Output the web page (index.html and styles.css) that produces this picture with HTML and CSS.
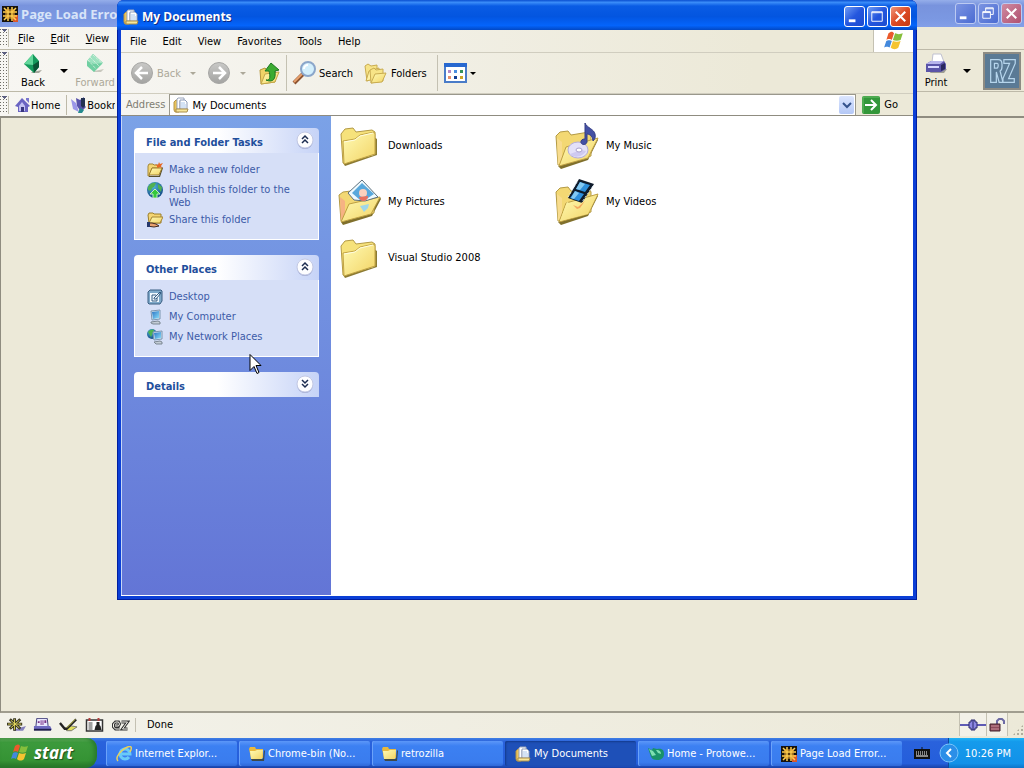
FILE: index.html
```html
<!DOCTYPE html>
<html lang="en">
<head>
  <meta charset="UTF-8" />
  <title>My Documents</title>
  <link rel="stylesheet" href="styles.css">
</head>
<body>
  <svg class="sprites" aria-hidden="true">
    <defs>
      <linearGradient id="gFolder" x1="0" y1="0" x2="1" y2="1">
        <stop offset="0" stop-color="#fffbb5" />
        <stop offset="1" stop-color="#f2d364" />
      </linearGradient>
      <linearGradient id="gGray" x1="0" y1="0" x2="0" y2="1">
        <stop offset="0" stop-color="#c9c9c7" />
        <stop offset="1" stop-color="#a3a3a1" />
      </linearGradient>
      <linearGradient id="gScreen" x1="0" y1="0" x2="1" y2="1">
        <stop offset="0" stop-color="#2a73c4" />
        <stop offset="1" stop-color="#8be0fa" />
      </linearGradient>
      <radialGradient id="gGlobe" cx="0.4" cy="0.3" r="0.8">
        <stop offset="0" stop-color="#4fb6d8" />
        <stop offset="1" stop-color="#0d3f7c" />
      </radialGradient>
    </defs>

    <symbol id="folder" viewBox="0 0 48 48">
      <path d="M7 40l31-8V14l3 2v16L9 43z" fill="#8c7b33" />
      <path d="M5 11l4-5 8-1 3 4 16-2 3 2v22L7 40z" fill="#f6e27b" stroke="#b39a45" />
      <path d="M7 18l12-2 5-4 14-3 1 2v20L8 41z" fill="url(#gFolder)" stroke="#c2a444" />
      <path d="M8 19l11-2 5-4 13-3" fill="none" stroke="#fffde0" />
    </symbol>

    <symbol id="folder-open" viewBox="0 0 48 48">
      <path d="M4 43l29-8 10-20 1 2-10 20L7 46z" fill="#80702c" />
      <path d="M2 13l4-4 8-1 3 4 18-3 2 4v20L4 42z" fill="#f3d873" stroke="#b39a45" />
      <path d="M3 15l5 4v18l-4 5z" fill="#f8dc8e" />
      <path d="M5 43l7-19 32-9-10 20z" fill="url(#gFolder)" stroke="#bd9f42" />
    </symbol>

    <symbol id="folder-pictures" viewBox="0 0 48 48">
      <path d="M5 43l29-8 10-17 1 2-9 17L7 46z" fill="#80702c" />
      <path d="M3 16l4-3 8-1 3 3 18-3 2 4v18L5 42z" fill="#f3d873" stroke="#b39a45" />
      <path d="M4 18l5 4v15l-4 5z" fill="#f6b383" />
      <path d="M5 43l8-18 31-7-9 17z" fill="url(#gFolder)" stroke="#bd9f42" />
      <path d="M26 1l16 17-13 4-11-1-6-7z" fill="#eefaff" stroke="#5c6f7c" />
      <path d="M26 4l12 11-9 6h-5l-8-7z" fill="#58a8dc" />
      <circle cx="27" cy="14" r="4" fill="#fbd0bd" />
      <path d="M23 18a4 4 0 0 0 9-1z" fill="#e8705e" />
      <path d="M24 27l9-2-1 4-4 4z" fill="#9fd6e9" />
    </symbol>

    <symbol id="folder-music" viewBox="0 0 48 48">
      <use href="#folder-open" />
      <ellipse cx="24" cy="27" rx="10" ry="8" fill="#e4e1f8" stroke="#b4add8" />
      <path d="M16 31c3 4 12 4 16-3l-5-1z" fill="#cfcaf0" />
      <ellipse cx="25" cy="27" rx="3" ry="2" fill="#fff" stroke="#a89fcc" />
      <path d="M31 0c2 5 9 6 10 11 1 4-1 6-2 7 0-6-5-7-6-7v8c-1 4-7 3-6-1 1-2 3-2 4-2z" fill="#4450a4" stroke="#343d86" />
    </symbol>

    <symbol id="folder-videos" viewBox="0 0 48 48">
      <use href="#folder-open" />
      <path d="M25 0l15 5-12 19-14-5z" fill="#101c2c" />
      <path d="M26 3l10 3-5 7-9-3zM21 12l9 3-5 7-9-3z" fill="#2e8fdb" />
      <path d="M26 3l5 2-5 6-4-1zM21 12l4 2-5 6-3-1z" fill="#83c9f2" />
      <path d="M23 3l-9 15M39 7L28 23" stroke="#d4e6f2" stroke-dasharray="2 2" />
      <path d="M6 42l7-19 8 4 22-11-9 19z" fill="url(#gFolder)" />
      <path d="M19 26l5 2 7-6-5 7-3 1z" fill="#f2a85e" />
    </symbol>

    <symbol id="folder-small" viewBox="0 0 16 16">
      <path d="M2 13h12l1-9 1 1-1 10H3z" fill="#3f4a4a" />
      <path d="M0 3l1-2h5l1 2h7v9H2z" fill="#e9b93e" />
      <path d="M1 5h5l2-1h6l-1 9H2z" fill="url(#gFolder)" />
    </symbol>

    <symbol id="docs" viewBox="0 0 16 16">
      <path d="M1 5l2-2h3v12H2l-1-2z" fill="#eac45a" stroke="#b59448" />
      <path d="M4 2l1-1h6v3H7v8H4z" fill="#fff" stroke="#9aa5bb" />
      <path d="M7 3h5l2 2v7H7z" fill="#fff" stroke="#8c9bb8" />
      <path d="M8 6h4M8 8h5M8 10h5" stroke="#a9c6ea" />
      <path d="M3 12h12l-1 3H3z" fill="#f8e79a" stroke="#a98d4a" />
    </symbol>

    <symbol id="flag" viewBox="0 0 20 18">
      <path d="M5 2c2-2 4-2 5 0L8 8C7 7 4 7 3 8z" fill="#ea5a2c" />
      <path d="M11 2c2 1 5 1 7 0l-2 6c-2 1-5 1-7 0z" fill="#86bf3c" />
      <path d="M3 9c1-1 4-1 5 0l-2 6c-1-1-4-1-5 0z" fill="#4389dd" />
      <path d="M9 9c2 1 5 1 7 0l-2 6c-2 2-5 2-7 0z" fill="#f5c431" />
    </symbol>

    <symbol id="mozilla" viewBox="0 0 16 16">
      <path d="M0 0h16v16H0z" fill="#17130f" />
      <path d="M11 9h5v7h-5z" fill="#d9572b" />
      <path d="M5 4h6l1 1v6l-1 1H5l-1-1V5z" fill="#5c3a0e" />
      <path d="M6 1v14M10 1v14M1 6h14M1 10h14" stroke="#ffcf4e" stroke-width="1.5" />
      <path d="M2 2l3 3M14 2l-3 3M2 14l3-3M14 14l-3-3" stroke="#ffcf4e" stroke-width="1.5" />
      <path d="M4 4h8v8H4z" fill="none" stroke="#f0b23a" />
    </symbol>

    <symbol id="publish" viewBox="0 0 16 16">
      <circle cx="8" cy="8" r="8" fill="url(#gGlobe)" />
      <path d="M1 5c2-4 6-5 8-4L7 5 5 6l-1 3-3-1zM11 2l4 3-1 5-3-4z" fill="#51b052" />
      <path d="M8 7l5 5h-3v4H6v-4H3z" fill="#35c83d" stroke="#bfeeba" />
    </symbol>

    <symbol id="new-folder" viewBox="0 0 16 16">
      <path d="M2 14h10l3-9 1 1-3 9H2z" fill="#554e2b" />
      <path d="M1 4l1-2h4l1 1h5v3H5l-3 8H1z" fill="#f4d573" stroke="#a38735" />
      <path d="M2 13l3-7h10l-3 7z" fill="url(#gFolder)" stroke="#9f7f2c" />
      <path d="M12 0l1 2 3-1-2 3 1 2-3-1-2 1V4L8 2l3 1z" fill="#e76824" />
    </symbol>

    <symbol id="share" viewBox="0 0 16 16">
      <path d="M1 3l1-2h4l1 1h7v9H2z" fill="#f4d573" stroke="#9b7e2b" />
      <path d="M2 11l3-6h11l-3 6z" fill="url(#gFolder)" stroke="#a68534" />
      <path d="M0 11h5l4 1 3 2-5 1-7-1z" fill="#e9a16d" stroke="#432c22" />
      <path d="M0 10h3v5H0z" fill="#26386c" />
    </symbol>

    <symbol id="desktop" viewBox="0 0 16 16">
      <path d="M3 1h11l1 1v10l-2 3H2l-1-1V3z" fill="#7ea9ca" stroke="#3a5e82" />
      <path d="M3 4h9v9H3z" fill="#f0f8ff" />
      <path d="M9 6H5v6h5V9M7 9l6-6 1 1-5 6H7z" fill="none" stroke="#345a80" />
    </symbol>

    <symbol id="computer" viewBox="0 0 16 16">
      <path d="M4 2l9-1v9l-8 1z" fill="#d8e6f0" stroke="#7a95b0" />
      <path d="M5 3l7-1v7l-6 1z" fill="url(#gScreen)" />
      <path d="M4 13l7-1 2 1v2H6l-2-1z" fill="#c4cdd6" stroke="#7b8792" />
    </symbol>

    <symbol id="network" viewBox="0 0 16 16">
      <circle cx="5" cy="5" r="5" fill="url(#gGlobe)" />
      <path d="M1 3c2-3 5-3 6-2L4 8z" fill="#4db353" />
      <path d="M6 3l9-1v8l-8 1z" fill="#d8e6f0" stroke="#7a95b0" />
      <path d="M7 4l7-1v6l-6 1z" fill="url(#gScreen)" />
      <path d="M7 13l6-1 2 1v2H9z" fill="#c4cdd6" stroke="#7b8792" />
    </symbol>

    <symbol id="arrow-left" viewBox="0 0 24 24">
      <circle cx="12" cy="12" r="10.5" fill="url(#gGray)" stroke="#a7a7a5" />
      <path d="M18 12H7M12 6l-6 6 6 6" fill="none" stroke="#fff" stroke-width="2.5" />
    </symbol>

    <symbol id="arrow-right" viewBox="0 0 24 24">
      <circle cx="12" cy="12" r="10.5" fill="url(#gGray)" stroke="#a7a7a5" />
      <path d="M6 12h11M12 6l6 6-6 6" fill="none" stroke="#fff" stroke-width="2.5" />
    </symbol>

    <symbol id="up" viewBox="0 0 24 24">
      <path d="M3 9l5-2 2 2 8-1v13L4 23z" fill="#efd367" stroke="#b6973b" />
      <path d="M4 23l4-10 14-2-4 10z" fill="url(#gFolder)" stroke="#c4a64a" />
      <path d="M9 19c5 1 4-5 3-9H8l6-8 8 7-4 1c1 8-2 12-9 9z" fill="#3bab31" stroke="#1c7522" />
    </symbol>

    <symbol id="search" viewBox="0 0 24 24">
      <path d="M2 22l9-9" stroke="#8b5230" stroke-width="4" />
      <path d="M2 21l8-8" stroke="#e8a06c" stroke-width="2" />
      <circle cx="16" cy="8" r="7" fill="#d3effc" stroke="#8ba6ca" stroke-width="2" />
      <path d="M12 8a4 4 0 0 1 4-4" fill="none" stroke="#fff" stroke-width="2" />
    </symbol>

    <symbol id="folders" viewBox="0 0 24 24">
      <path d="M1 5l3-2 3 2 6-1v12L3 20z" fill="#f7e487" stroke="#c9ac50" />
      <path d="M2 20l3-10 10-3v10z" fill="#fdf2a6" stroke="#c9ac50" />
      <path d="M6 9l4-2 2 2 7-1v12L7 22z" fill="#f7e487" stroke="#c9ac50" />
      <path d="M7 22l4-9 11-1-4 9z" fill="url(#gFolder)" stroke="#c9ac50" />
    </symbol>

    <symbol id="views" viewBox="0 0 24 20">
      <path d="M2 1h21v18H2z" fill="#fff" stroke="#4a7cc8" stroke-width="2" />
      <path d="M1 0h23v4H1z" fill="#2768d0" />
      <path d="M5 7h3v3H5z" fill="#b48ac4" />
      <path d="M11 7h3v3h-3z" fill="#4b8fe0" />
      <path d="M17 7h3v3h-3z" fill="#35915a" />
      <path d="M5 13h3v3H5z" fill="#e68f6c" />
      <path d="M11 13h3v3h-3z" fill="#123f94" />
      <path d="M17 13h3v3h-3z" fill="#cba52a" />
    </symbol>

    <symbol id="go" viewBox="0 0 18 18">
      <rect width="18" height="18" rx="2" fill="#33973a" />
      <path d="M1 17V1h16" fill="none" stroke="#6abf68" />
      <path d="M3 9h10M9 4l5 5-5 5" fill="none" stroke="#fff" stroke-width="2" />
    </symbol>

    <symbol id="chevrons-up" viewBox="0 0 18 18">
      <circle cx="9" cy="10" r="8" fill="#9fa8cf" />
      <circle cx="9" cy="9" r="8" fill="#fdfdff" stroke="#c3c9e4" />
      <path d="M6 8l3-3 3 3M6 12l3-3 3 3" fill="none" stroke="#1c2c50" stroke-width="1.5" />
    </symbol>

    <symbol id="chevrons-down" viewBox="0 0 18 18">
      <circle cx="9" cy="10" r="8" fill="#9fa8cf" />
      <circle cx="9" cy="9" r="8" fill="#fdfdff" stroke="#c3c9e4" />
      <path d="M6 5l3 3 3-3M6 9l3 3 3-3" fill="none" stroke="#1c2c50" stroke-width="1.5" />
    </symbol>

    <symbol id="caret" viewBox="0 0 8 4">
      <path d="M0 0h8L4 4z" fill="currentColor" />
    </symbol>

    <symbol id="min" viewBox="0 0 20 20">
      <path d="M4 13h7v3H4z" fill="#fff" />
    </symbol>
    <symbol id="max" viewBox="0 0 20 20">
      <path d="M4 5h11v10H4zM4 6h11" fill="none" stroke="#fff" />
    </symbol>
    <symbol id="restore" viewBox="0 0 20 20">
      <path d="M7 8V4h8v7h-3M4 8h8v7H4zM4 9h8M7 5h8" fill="none" stroke="#fff" />
    </symbol>
    <symbol id="close" viewBox="0 0 20 20">
      <path d="M5 5l10 10M15 5L5 15" stroke="#fff" stroke-width="2.2" />
    </symbol>

    <symbol id="gem-left" viewBox="0 0 20 22">
      <path d="M9 19l10-2-3 3H8z" fill="#a5a59b" />
      <path d="M10 1l6 7v6l-5 6-10-9z" fill="#159a5c" />
      <path d="M10 1L1 11l9 1z" fill="#63d79b" />
      <path d="M10 12l1 8 5-6V8z" fill="#0b5435" />
    </symbol>

    <symbol id="gem-right" viewBox="0 0 20 22">
      <path d="M9 18l10-2-3 3H8z" fill="#c8c8be" />
      <path d="M8 1l10 9-9 9-7-6V8z" fill="#70cfa2" />
      <path d="M8 1l10 9-9 1-7-3z" fill="#9de2c0" />
      <path d="M5 4l10 10M3 7l8 9M8 2l10 9" stroke="#ecf4e8" stroke-dasharray="1 1" />
    </symbol>

    <symbol id="home" viewBox="0 0 16 16">
      <path d="M0 9l7-8 8 8-2 1v5H3v-5z" fill="#6a64c2" />
      <path d="M4 9l3-4 3 4v5H4z" fill="#c4c2f2" />
      <path d="M6 10h3v5H6z" fill="#37357e" />
      <path d="M11 1h3v5l-3-3z" fill="#7a76cf" />
    </symbol>

    <symbol id="bookmark" viewBox="0 0 16 16">
      <path d="M0 2l5 4 3 9-6-3z" fill="#9b97e8" />
      <path d="M5 1l4 2 4-3v8l2 2-5 5-4-6z" fill="#5752aa" />
      <path d="M10 1h4v8l-2 2-2-2z" fill="#223152" />
      <path d="M9 11l4 2-2 3H7z" fill="#248a8e" />
    </symbol>

    <symbol id="printer" viewBox="0 0 24 20">
      <path d="M8 15h15l-3 4H6z" fill="#9d9d95" />
      <path d="M9 0h8l3 8H8z" fill="#fff" stroke="#c0c1d0" />
      <path d="M2 10l5-3h13l2 3v5l-5 3H2z" fill="#5a54a8" />
      <path d="M2 10l5-3h13l-4 3z" fill="#b6b3ec" />
      <path d="M4 13h11" stroke="#d9d8ff" stroke-width="2" />
      <path d="M17 11l4-2v6l-4 2z" fill="#2a285e" />
    </symbol>

    <symbol id="rz" viewBox="0 0 36 36">
      <path d="M6 30V6h8q4 0 4 5v2q0 4-2 5l3 12h-4l-3-11v11zM10 10h3q1 0 1 2t-1 3h-3zM20 6h12v4l-7 16h6v4H19v-4l7-16h-6z" fill="none" stroke="#b6d5ec" stroke-width="1.3" />
    </symbol>

    <symbol id="ie" viewBox="0 0 16 16">
      <path d="M13 11a5 5 0 1 1 1-3H5" fill="none" stroke="#69cbf8" stroke-width="3" />
      <path d="M2 15C-3 10 12-2 15 1c1 1 0 3-1 5" fill="none" stroke="#e8d05c" stroke-width="1.5" />
    </symbol>

    <symbol id="proto" viewBox="0 0 16 16">
      <path d="M0 2l4 2 1-2 4 1c6-1 7 2 7 5 0 4-3 6-7 6-5 0-6-3-7-6z" fill="#19926a" />
      <path d="M1 3l4 2 3 4-4 1zM8 4c4 0 5 2 5 4l-3-1z" fill="#7de0b3" />
    </symbol>

    <symbol id="compass" viewBox="0 0 20 14">
      <path d="M10 11l10-3-3 5H7z" fill="#8480bd" />
      <path d="M8 0v13M0 6h16M3 1l11 10M14 1L3 11" stroke="#34331f" stroke-width="3" />
      <path d="M8 1v11M1 6h14M4 2l9 8M13 2L4 10" stroke="#e6d95e" />
    </symbol>

    <symbol id="mail" viewBox="0 0 20 14">
      <path d="M4 0h11l1 9H3z" fill="#e9e7ff" stroke="#3c3976" />
      <path d="M5 3h2v2H5zM8 2h1v5H8zM10 2h1v5h-1zM12 2h2v3h-2z" fill="#7a3385" />
      <path d="M1 8h17l2 4H1z" fill="#6f6ac0" />
      <path d="M1 12h18" stroke="#1e1c4a" stroke-width="2" />
    </symbol>

    <symbol id="composer" viewBox="0 0 20 14">
      <path d="M7 10l6-2 6 1-6 4H8z" fill="#dfdd5c" stroke="#77776d" />
      <path d="M1 5l5 6h2L18 1" fill="none" stroke="#222" stroke-width="2.5" />
      <path d="M8 10L17 1" stroke="#dfdd5c" />
    </symbol>

    <symbol id="address-card" viewBox="0 0 18 14">
      <path d="M1 2h16v11H1z" fill="#fff" stroke="#333" stroke-width="1.5" />
      <path d="M12 0h2v3h-2zM3 0h2v3H3z" fill="#b23c3c" />
      <path d="M3 5h4M3 7h4M3 9h4M3 11h4" stroke="#444" />
      <path d="M9 12l1-4 1-1V4h3v3l1 1 1 4z" fill="#222" />
    </symbol>

    <symbol id="chatzilla" viewBox="0 0 18 14">
      <path d="M8 11H4L2 9V6l2-2h3l1 2-1 2H4M10 4h6l-5 7h5" fill="none" stroke="#333" stroke-width="3" />
      <path d="M8 11H4L2 9V6l2-2h3l1 2-1 2H4M10 4h6l-5 7h5" fill="none" stroke="#f4f2ea" />
    </symbol>

    <symbol id="plug" viewBox="0 0 26 14">
      <path d="M0 7h26" stroke="#5f5bb4" stroke-width="2" />
      <path d="M9 4h2V2h4v2h2v6h-2v2h-4v-2H9z" fill="#8d88e4" stroke="#2b286c" />
      <path d="M13 2v10" stroke="#2b286c" />
    </symbol>

    <symbol id="lock" viewBox="0 0 16 14">
      <path d="M8 7V3l2-2h3l2 2v3" fill="none" stroke="#6c6aa4" stroke-width="2" />
      <path d="M1 6h10v7H1z" fill="#8c4a5a" stroke="#44252c" />
      <path d="M2 8h8M2 11h8" stroke="#c98f98" />
    </symbol>

    <symbol id="keyboard" viewBox="0 0 16 12">
      <path d="M8 3V0" stroke="#111" />
      <rect x="0" y="2" width="16" height="10" fill="#111" />
      <path d="M2 5h12M2 7h12" stroke="#fff" stroke-dasharray="1 1" />
      <path d="M2 9h12" stroke="#fff" />
    </symbol>

    <symbol id="tray-arrow" viewBox="0 0 20 20">
      <circle cx="10" cy="10" r="9" fill="#2b8fe8" stroke="#7cc5fa" />
      <path d="M12 6l-4 4 4 4" fill="none" stroke="#fff" stroke-width="2" />
    </symbol>
  </svg>

  <div class="desktop">
    <section class="browser">
      <header class="browser-title">
        <svg class="icon16"><use href="#mozilla" /></svg>
        <span class="title-text">Page Load Error</span>
        <div class="controls">
          <button class="control" aria-label="Minimize"><svg><use href="#min" /></svg></button>
          <button class="control" aria-label="Restore"><svg><use href="#restore" /></svg></button>
          <button class="control control-close" aria-label="Close"><svg><use href="#close" /></svg></button>
        </div>
      </header>

      <nav class="browser-menu">
        <span class="grip"></span>
        <button><u>F</u>ile</button>
        <button><u>E</u>dit</button>
        <button><u>V</u>iew</button>
      </nav>

      <div class="browser-tools">
        <span class="grip"></span>
        <button class="tool tool-back"><svg><use href="#gem-left" /></svg>Back</button>
        <button class="drop" aria-label="Back history"><svg><use href="#caret" /></svg></button>
        <button class="tool tool-forward" disabled><svg><use href="#gem-right" /></svg>Forward</button>
        <span class="spacer"></span>
        <button class="tool"><svg><use href="#printer" /></svg>Print</button>
        <button class="drop" aria-label="Print options"><svg><use href="#caret" /></svg></button>
        <a class="throbber" href="#" aria-label="RetroZilla"><svg><use href="#rz" /></svg></a>
      </div>

      <div class="bookmarks">
        <span class="grip"></span>
        <a class="bookmark" href="#"><svg class="icon16"><use href="#home" /></svg>Home</a>
        <a class="bookmark bookmark-next" href="#"><svg class="icon16"><use href="#bookmark" /></svg>Bookm</a>
      </div>

      <div class="browser-page"></div>

      <footer class="status">
        <div class="components">
          <button aria-label="Navigator"><svg><use href="#compass" /></svg></button>
          <button aria-label="Mail"><svg><use href="#mail" /></svg></button>
          <button aria-label="Composer"><svg><use href="#composer" /></svg></button>
          <button aria-label="Address Book"><svg><use href="#address-card" /></svg></button>
          <button aria-label="ChatZilla"><svg><use href="#chatzilla" /></svg></button>
        </div>
        <span class="status-text">Done</span>
        <span class="status-cell"><svg class="plug"><use href="#plug" /></svg></span>
        <span class="status-cell status-lock"><svg class="lock"><use href="#lock" /></svg></span>
        <span class="resize"></span>
      </footer>
    </section>

    <main class="explorer">
      <header class="explorer-title">
        <svg class="icon16"><use href="#docs" /></svg>
        <h1 class="title-text">My Documents</h1>
        <div class="controls">
          <button class="control" aria-label="Minimize"><svg><use href="#min" /></svg></button>
          <button class="control" aria-label="Maximize"><svg><use href="#max" /></svg></button>
          <button class="control control-close" aria-label="Close"><svg><use href="#close" /></svg></button>
        </div>
      </header>

      <div class="explorer-body">
        <nav class="menu">
          <button>File</button>
          <button>Edit</button>
          <button>View</button>
          <button>Favorites</button>
          <button>Tools</button>
          <button>Help</button>
          <span class="flag"><svg><use href="#flag" /></svg></span>
        </nav>

        <div class="toolbar">
          <div class="group">
            <button class="item" disabled><svg class="icon24"><use href="#arrow-left" /></svg>Back</button>
            <button class="drop" disabled aria-label="Back list"><svg><use href="#caret" /></svg></button>
            <button class="item" disabled aria-label="Forward"><svg class="icon24"><use href="#arrow-right" /></svg></button>
            <button class="drop" disabled aria-label="Forward list"><svg><use href="#caret" /></svg></button>
            <button class="item" aria-label="Up"><svg class="icon24"><use href="#up" /></svg></button>
          </div>
          <div class="group group-panes">
            <button class="item"><svg class="icon24"><use href="#search" /></svg>Search</button>
            <button class="item"><svg class="icon24"><use href="#folders" /></svg>Folders</button>
          </div>
          <div class="group">
            <button class="item" aria-label="Views"><svg class="icon24"><use href="#views" /></svg><svg class="caret"><use href="#caret" /></svg></button>
          </div>
        </div>

        <form class="address">
          <label for="path">Address</label>
          <div class="path">
            <svg class="icon16"><use href="#docs" /></svg>
            <input type="text" id="path" value="My Documents" />
            <button type="button" class="path-drop" aria-label="Show list">
              <svg viewBox="0 0 10 8"><path d="M1 2l4 4 4-4" fill="none" stroke="#34528c" stroke-width="2" /></svg>
            </button>
          </div>
          <button type="submit" class="go"><svg><use href="#go" /></svg>Go</button>
        </form>

        <div class="content">
          <aside class="tasks">
            <section class="panel">
              <h2>File and Folder Tasks <button aria-label="Collapse"><svg><use href="#chevrons-up" /></svg></button></h2>
              <ul>
                <li><svg class="icon16"><use href="#new-folder" /></svg><a href="#">Make a new folder</a></li>
                <li><svg class="icon16"><use href="#publish" /></svg><a href="#">Publish this folder to the Web</a></li>
                <li><svg class="icon16"><use href="#share" /></svg><a href="#">Share this folder</a></li>
              </ul>
            </section>
            <section class="panel">
              <h2>Other Places <button aria-label="Collapse"><svg><use href="#chevrons-up" /></svg></button></h2>
              <ul>
                <li><svg class="icon16"><use href="#desktop" /></svg><a href="#">Desktop</a></li>
                <li><svg class="icon16"><use href="#computer" /></svg><a href="#">My Computer</a></li>
                <li><svg class="icon16"><use href="#network" /></svg><a href="#">My Network Places</a></li>
              </ul>
            </section>
            <section class="panel">
              <h2>Details <button aria-label="Expand"><svg><use href="#chevrons-down" /></svg></button></h2>
            </section>
          </aside>

          <div class="files">
            <a class="file" href="#"><svg><use href="#folder" /></svg>Downloads</a>
            <a class="file" href="#"><svg><use href="#folder-music" /></svg>My Music</a>
            <a class="file" href="#"><svg><use href="#folder-pictures" /></svg>My Pictures</a>
            <a class="file" href="#"><svg><use href="#folder-videos" /></svg>My Videos</a>
            <a class="file" href="#"><svg><use href="#folder" /></svg>Visual Studio 2008</a>
          </div>
        </div>
      </div>
    </main>

    <footer class="taskbar">
      <button class="start"><svg><use href="#flag" /></svg>start</button>
      <div class="buttons">
        <button class="task"><svg class="icon16"><use href="#ie" /></svg>Internet Explor...</button>
        <button class="task"><svg class="icon16"><use href="#folder-small" /></svg>Chrome-bin (No...</button>
        <button class="task"><svg class="icon16"><use href="#folder-small" /></svg>retrozilla</button>
        <button class="task task-active"><svg class="icon16"><use href="#docs" /></svg>My Documents</button>
        <button class="task"><svg class="icon16"><use href="#proto" /></svg>Home - Protowe...</button>
        <button class="task"><svg class="icon16"><use href="#mozilla" /></svg>Page Load Error...</button>
      </div>
      <button class="language" aria-label="Keyboard"><svg><use href="#keyboard" /></svg></button>
      <div class="tray">
        <button class="tray-toggle" aria-label="Show hidden icons"><svg><use href="#tray-arrow" /></svg></button>
        <time>10:26 PM</time>
      </div>
    </footer>

    <svg class="cursor" viewBox="0 0 13 21">
      <path d="M1 1v16l4-4 3 7 2-1-3-7h5z" fill="#fff" stroke="#000" />
    </svg>
  </div>
</body>
</html>
```
FILE: styles.css
```css
* {
  box-sizing: border-box;
}

body {
  margin: 0;
  font-family: "DejaVu Sans Condensed", "Liberation Sans", sans-serif;
  font-size: 11px;
  line-height: 13px;
  color: #000;
  cursor: default;
}

button, input {
  font: inherit;
  color: inherit;
  padding: 0;
  margin: 0;
  border: none;
  background: none;
}

a {
  color: inherit;
  text-decoration: none;
}

svg {
  display: block;
  flex: none;
}

.sprites {
  position: absolute;
  width: 0;
  height: 0;
}

.icon16 {
  width: 16px;
  height: 16px;
}

.icon24 {
  width: 24px;
  height: 24px;
}

.desktop {
  position: relative;
  display: flex;
  flex-direction: column;
  height: 100vh;
  overflow: hidden;
  background-color: #ece9d8;
}

/* window title bars */

.title-text {
  flex: 1;
  margin: 0;
  font-family: "Open Sans", "Noto Sans", sans-serif;
  font-size: 12px;
  font-weight: bold;
  line-height: 16px;
  white-space: nowrap;
}

.controls {
  display: flex;
  gap: 2px;
}

.control {
  width: 21px;
  height: 21px;
  border: 1px solid #fff;
  border-radius: 3px;
  background: linear-gradient(135deg, #6f9cf4, #2456de 50%, #1c4ccf);
}

.control svg {
  width: 19px;
  height: 19px;
}

.control-close {
  background: linear-gradient(135deg, #f0957a, #dc4a24 50%, #c43a14);
}

/* browser window */

.browser {
  flex: 1;
  display: flex;
  flex-direction: column;
}

.browser-title {
  display: flex;
  align-items: center;
  gap: 3px;
  height: 27px;
  padding: 0 2px;
  color: #d8e4f8;
  background: linear-gradient(#95aeea, #7893dd 20%, #7b98e2 70%, #839fe8);
}

.browser-title .title-text {
  font-size: 13px;
}

.browser-title .control {
  border-color: #bccaf2;
  background: linear-gradient(135deg, #7b94e2, #4a6bd2);
}

.browser-title .control-close {
  background: linear-gradient(135deg, #cf8ba2, #b0506f);
}

.browser-menu, .browser-tools, .bookmarks {
  display: flex;
  background: linear-gradient(90deg, #f7f6f2, #ece9d8 80%);
  border-bottom: 1px solid #bdb9a8;
}

.grip {
  width: 9px;
  margin: 2px 1px 2px 0;
  border-right: 1px solid #c4c1b2;
  background:
    conic-gradient(from -45deg at 50% 100%, #5c5f80 90deg, transparent 90deg) 2px 0 / 5px 3px no-repeat,
    radial-gradient(#6f6e68 30%, transparent 40%) 2px 5px / 3px 3px;
}

.browser-menu {
  height: 23px;
}

.browser-menu button {
  margin-left: 16px;
}

.browser-menu .grip + button {
  margin-left: 8px;
}

.browser-tools {
  height: 42px;
  align-items: center;
  padding-right: 3px;
}

.browser-tools .grip, .bookmarks .grip {
  align-self: stretch;
}

.tool {
  display: flex;
  flex-direction: column;
  align-items: center;
  gap: 1px;
  min-width: 46px;
}

.tool svg {
  width: 24px;
  height: 22px;
}

.tool:disabled {
  color: #aca899;
}

.spacer {
  flex: 1;
}

.drop {
  width: 16px;
}

.drop svg {
  width: 8px;
  height: 4px;
  margin: auto;
}

.throbber {
  width: 38px;
  height: 38px;
  margin-left: 8px;
  border: 2px solid #8d8b83;
  background-color: #5a7a95;
}

.throbber svg {
  width: 34px;
  height: 34px;
}

.bookmarks {
  height: 26px;
  align-items: center;
  padding-top: 2px;
  border-bottom: 2px solid #8f8c80;
}

.bookmark {
  display: flex;
  align-items: center;
  height: 20px;
  padding: 0 6px 0 5px;
}

.bookmark-next {
  width: 49px;
  padding: 0 0 0 4px;
  overflow: hidden;
  border-left: 1px solid #bdb9a8;
}

.browser-page {
  flex: 1;
  border-left: 1px solid #8f8c80;
  border-bottom: 2px solid #a09d8f;
}

.status {
  display: flex;
  align-items: center;
  height: 25px;
  padding-bottom: 2px;
  background: linear-gradient(90deg, #f3f2ea, #ece9d8);
}

.components {
  display: flex;
  align-items: center;
  gap: 7px;
  padding: 0 5px 0 7px;
  border-right: 1px solid #c4c1b2;
}

.components svg {
  width: 19px;
  height: 14px;
}

.status-text {
  flex: 1;
  padding-left: 11px;
}

.status-cell {
  display: flex;
  align-items: center;
  height: 23px;
  border-left: 1px solid #c4c1b2;
  background-color: #f3f1e8;
}

.status-lock {
  padding: 0 2px;
  border-right: 1px solid #c4c1b2;
}

.plug {
  width: 26px;
  height: 14px;
}

.lock {
  width: 16px;
  height: 14px;
}

.resize {
  width: 12px;
  height: 12px;
  margin-left: 4px;
  align-self: flex-end;
  clip-path: polygon(100% 0, 100% 100%, 0 100%);
  background: radial-gradient(#b0ad9c 35%, transparent 40%) 0 0 / 4px 4px;
}

/* explorer window */

.explorer {
  position: absolute;
  top: 0;
  right: 107px;
  bottom: 168px;
  left: 117px;
  display: flex;
  flex-direction: column;
  padding: 0 4px 4px;
  border-radius: 7px 7px 0 0;
  background-color: #0b3fd6;
  box-shadow: inset 1px -1px #001ea0, inset -1px 0 #001ea0;
}

.explorer-title {
  display: flex;
  align-items: center;
  gap: 3px;
  height: 30px;
  margin: 0 -4px;
  padding: 3px 6px 0;
  border-radius: 7px 7px 0 0;
  color: #fff;
  background: linear-gradient(#0a4fd0, #3a8cf8 8%, #0a5ce4 20%, #0355e0 55%, #0464fb 85%, #0248c4);
}

.explorer-title .title-text {
  text-shadow: 1px 1px #0a2a84;
}

.explorer-body {
  flex: 1;
  display: flex;
  flex-direction: column;
  background-color: #fff;
}

.menu, .toolbar, .address {
  display: flex;
  background: linear-gradient(90deg, #f6f5f1, #ece9d8 80%);
  border-bottom: 1px solid #d0cdbf;
}

.menu {
  height: 23px;
  gap: 16px;
  padding-left: 9px;
}

.flag {
  display: flex;
  align-items: center;
  justify-content: center;
  width: 40px;
  margin-left: auto;
  border-left: 1px solid #c4c1b2;
  background-color: #fff;
}

.flag svg {
  width: 22px;
  height: 20px;
}

.toolbar {
  height: 41px;
  padding: 2px 0 2px 9px;
}

.group {
  display: flex;
  align-items: center;
  padding-right: 5px;
  margin-right: 5px;
  border-right: 1px solid #c4c1b2;
}

.group-panes {
  gap: 11px;
  padding-right: 10px;
}

.group:last-child {
  border: none;
}

.item {
  display: flex;
  align-items: center;
  gap: 3px;
}

.toolbar .drop {
  width: 24px;
  margin-right: 2px;
}

.toolbar .drop svg, .caret {
  width: 6px;
  height: 3px;
}

.toolbar :disabled {
  color: #aca899;
}

.address {
  height: 22px;
  align-items: center;
  padding-left: 5px;
  border-bottom: 1px solid #8f8c80;
}

.address label {
  color: #807d72;
  margin-right: 4px;
}

.path {
  flex: 1;
  display: flex;
  align-items: center;
  gap: 3px;
  height: 21px;
  padding: 0 1px 0 3px;
  border: 1px solid #9a988c;
  border-bottom: none;
  background-color: #fff;
}

.path input {
  flex: 1;
  outline: none;
}

.path-drop {
  width: 15px;
  height: 18px;
  border-radius: 2px;
  background: linear-gradient(#dce6fe, #b4c8f6);
}

.path-drop svg {
  width: 10px;
  height: 8px;
  margin: auto;
}

.go {
  display: flex;
  align-items: center;
  gap: 4px;
  padding: 0 15px 0 6px;
}

.go svg {
  width: 18px;
  height: 18px;
}

.content {
  flex: 1;
  display: flex;
}

/* task pane */

.tasks {
  width: 210px;
  padding: 12px 12px 12px 13px;
  margin-bottom: 1px;
  background: linear-gradient(#7ba2e7, #6375d6);
  box-shadow: inset 1px 0 #c6d6f6;
}

.panel {
  margin-bottom: 15px;
}

.panel h2 {
  display: flex;
  align-items: center;
  justify-content: space-between;
  height: 25px;
  margin: 0;
  padding: 3px 5px 0 12px;
  border-radius: 4px 4px 0 0;
  font-size: 11px;
  color: #1f4f9c;
  background: linear-gradient(90deg, #fff 45%, #c6d3f7);
}

.panel h2 button {
  align-self: flex-start;
}

.panel h2 svg {
  width: 18px;
  height: 18px;
}

.panel ul {
  display: flex;
  flex-direction: column;
  gap: 4px;
  margin: 0;
  padding: 9px 24px 11px 12px;
  border: 1px solid #fff;
  border-top: none;
  list-style: none;
  color: #3c5ba8;
  background-color: #d6dff7;
}

.panel li {
  display: flex;
  align-items: flex-start;
  gap: 6px;
}

.panel li a {
  margin: 1px 0 -1px;
}

/* folder view */

.files {
  flex: 1;
  display: grid;
  grid-template-columns: repeat(auto-fill, 218px);
  grid-auto-rows: 56px;
  align-content: start;
  padding: 1px 5px;
}

.file {
  display: flex;
  align-items: center;
  gap: 4px;
}

.file svg {
  width: 48px;
  height: 48px;
  margin: 2px 0 -2px;
}

/* taskbar */

.taskbar {
  display: flex;
  height: 30px;
  color: #fff;
  background: linear-gradient(#3f7fe4, #2a62dc 12%, #245edb 85%, #1941a5);
}

.start {
  display: flex;
  align-items: center;
  gap: 4px;
  width: 97px;
  margin-right: 9px;
  padding: 0 10px;
  border-radius: 0 10px 12px 0;
  font-family: "Open Sans", "Noto Sans", sans-serif;
  font-size: 17px;
  font-weight: bold;
  font-style: italic;
  line-height: 20px;
  text-shadow: 1px 1px 1px #1d4d1c;
  background: linear-gradient(#62ae5d, #3c9a3c 15%, #359334 75%, #257327);
  box-shadow: inset -3px 0 4px #287a2c;
}

.start svg {
  width: 20px;
  height: 18px;
}

.buttons {
  flex: 1;
  display: flex;
  gap: 2px;
  padding: 3px 0 2px;
}

.task {
  display: flex;
  align-items: center;
  gap: 3px;
  flex: 0 1 131px;
  min-width: 0;
  padding: 0 10px;
  border-radius: 2px;
  overflow: hidden;
  white-space: nowrap;
  background: linear-gradient(#5c97f8, #3c80f2 20%, #3a7cee 85%, #2f68d8);
  box-shadow: inset 1px 0 #6ba2fa;
}

.task-active {
  background: #1e50b8;
  box-shadow: inset 1px 1px 2px #143a8c;
}

.language {
  width: 38px;
  padding-right: 14px;
}

.language svg {
  width: 16px;
  height: 12px;
  margin: auto;
}

.tray {
  display: flex;
  align-items: center;
  gap: 6px;
  padding-right: 13px;
  border-left: 1px solid #0a4a9e;
  background: linear-gradient(#1fb4f6, #159bec 12%, #1291e8 85%, #0d74c8);
}

.tray-toggle {
  margin-left: -10px;
}

.tray-toggle svg {
  width: 20px;
  height: 20px;
}

.cursor {
  position: absolute;
  top: 353px;
  left: 249px;
  width: 13px;
  height: 22px;
}
```
